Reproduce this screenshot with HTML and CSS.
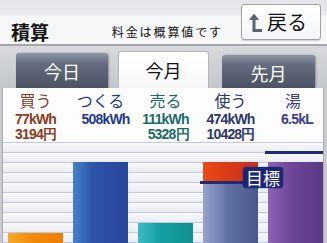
FILE: index.html
```html
<!DOCTYPE html>
<html lang="ja">
<head>
<meta charset="utf-8">
<link rel="stylesheet" href="styles.css">
</head>
<body>
<div class="app">
  <header class="hdr">
    <h1 class="title">積算</h1>
    <span class="note">料金は概算値です</span>
    <button class="back">
      <svg class="back-icon" width="14" height="20" viewBox="0 0 14 20">
        <polygon points="0,7 5,0.5 10,7" fill="#5a6274"/>
        <path d="M5 6 V17.5 H13" fill="none" stroke="#5a6274" stroke-width="3"/>
      </svg>
      <span>戻る</span>
    </button>
  </header>
  <nav class="tabs">
    <div class="tab tab-day">今日</div>
    <div class="tab tab-active">今月</div>
    <div class="tab tab-last">先月</div>
  </nav>
  <section class="panel">
    <div class="stats">
      <div class="stat buy"><div class="name">買う</div><div class="nums"><div>77kWh</div><div>3194円</div></div></div>
      <div class="stat make"><div class="name">つくる</div><div class="nums"><div>508kWh</div></div></div>
      <div class="stat sell"><div class="name">売る</div><div class="nums"><div>111kWh</div><div>5328円</div></div></div>
      <div class="stat use"><div class="name">使う</div><div class="nums"><div>474kWh</div><div>10428円</div></div></div>
      <div class="stat water"><div class="name">湯</div><div class="nums"><div>6.5kL</div></div></div>
    </div>
    <div class="chart">
      <div class="col"><div class="bar bar-buy" style="height:10px"></div></div>
      <div class="col"><div class="bar bar-make" style="height:81px"></div></div>
      <div class="col"><div class="bar bar-sell" style="height:20px"></div></div>
      <div class="col col-use">
        <div class="bar bar-use" style="height:81px">
          <div class="over" style="height:21px"></div>
        </div>
        <div class="target target-use"></div>
        <div class="goal">目標</div>
      </div>
      <div class="col col-water">
        <div class="bar bar-water" style="height:81px"></div>
        <div class="target target-water"></div>
      </div>
    </div>
  </section>
</div>
</body>
</html>
```

FILE: styles.css
```css
* { box-sizing: border-box; }
html, body { margin: 0; padding: 0; }
body {
  width: 327px;
  height: 243px;
  overflow: hidden;
  font-family: "Noto Sans CJK JP", "Liberation Sans", sans-serif;
  background: #c9cbcf;
}
.app { width: 327px; height: 243px; display: flex; flex-direction: column; }

.hdr {
  height: 46px;
  display: flex;
  align-items: flex-start;
  padding: 0 6px 0 11px;
  background: linear-gradient(#e3e5e8 0, #e6e8eb 14px, #f5f6f7 16px, #f7f7f8 43px);
  border-bottom: 2px solid #a4a7ac;
}
.title {
  margin: 21px 0 0 0;
  font-size: 19px;
  line-height: 22px;
  font-weight: 700;
  color: #141414;
}
.note {
  margin: 24px 18px 0 auto;
  font-size: 12px;
  line-height: 16px;
  letter-spacing: 1.9px;
  color: #111;
}
.back {
  margin-top: 4px;
  width: 80px;
  height: 36px;
  padding: 0 0 0 7px;
  display: flex;
  align-items: center;
  gap: 4px;
  background: linear-gradient(#ffffff, #f4f5f6);
  border: 1px solid #9ea2a8;
  border-radius: 3px;
  box-shadow: 0 1px 1px rgba(0,0,0,0.15);
  font-family: inherit;
  font-size: 20px;
  line-height: 22px;
  color: #141414;
}
.back-icon { flex: none; margin-top: 1px; }

.tabs {
  height: 42px;
  display: flex;
  align-items: flex-end;
  background: linear-gradient(#d8dadd, #c3c6ca);
}
.tab {
  display: flex;
  align-items: center;
  justify-content: center;
  font-size: 18px;
  border-radius: 3px 3px 0 0;
}
.tab-day, .tab-last {
  color: #ffffff;
  background: linear-gradient(#8e96a5 0, #646c7e 30%, #4a5264 100%);
  box-shadow: 1px 0 2px rgba(0,0,0,0.3);
}
.tab-day { margin-left: 16px; width: 92px; height: 35px; }
.tab-active {
  margin-left: 10px;
  width: 91px;
  height: 37px;
  color: #111;
  background: linear-gradient(#ffffff, #f6f7f8);
  border: 1px solid #b3b6bb;
  border-bottom: none;
  padding-bottom: 1px;
}
.tab-last { margin-left: 13px; width: 93px; height: 33px; padding-top: 2px; }

.panel {
  flex: 1;
  margin: 0 3px 0 2px;
  border-left: 1px solid #a9adb3;
  border-right: 1px solid #a9adb3;
  background: #fdfdfe;
  display: flex;
  flex-direction: column;
}
.stats {
  height: 54px;
  display: grid;
  grid-template-columns: 65px 65px 65px 65px 60px;
  padding-top: 1px;
}
.stat { display: flex; flex-direction: column; align-items: center; }
.name { font-size: 16px; line-height: 23px; }
.nums {
  font-family: "Liberation Sans", sans-serif;
  font-weight: 700;
  font-size: 14px;
  line-height: 15px;
  letter-spacing: -0.8px;
  text-align: right;
}
.buy { color: #8a3b1b; }
.make { color: #1c3a8e; }
.make .nums { margin-left: 10px; }
.sell { color: #1a6a67; }
.use { color: #2c3868; }
.water { color: #3c3b84; }
.water .nums { margin-left: 8px; }

.chart {
  flex: 1;
  display: grid;
  grid-template-columns: 65px 65px 65px 65px 60px;
  align-items: end;
  background: repeating-linear-gradient(to bottom, #c2c8dd 0, #c2c8dd 1px, #f9fafc 1px, #e9ecf2 10px);
}
.col { position: relative; height: 100%; display: flex; align-items: flex-end; padding-left: 5px; }
.bar { width: 55px; position: relative; }
.bar-buy { background: linear-gradient(to right, #f6a92a, #f08a0a 45%, #ee7e00); }
.bar-make { background: linear-gradient(to right, #4582cc, #2f55a8 35%, #28469c); }
.bar-sell { background: linear-gradient(to right, #3dbcc2, #16a0a4 40%, #10908f); }
.bar-use { background: linear-gradient(to right, #96a4cc, #6272a4 45%, #4a5888); }
.over { background: linear-gradient(to right, #ec4a12, #d83a18 50%, #c42e22); }
.bar-water { background: linear-gradient(to right, #8e62b6, #6c4598 45%, #583a86); }

.target { position: absolute; background: #232a70; }
.target-use { left: 2px; top: 39px; width: 50px; height: 3px; }
.target-water { left: 2px; right: 0; top: 9px; height: 3px; }
.goal {
  position: absolute;
  left: 45px;
  top: 25px;
  width: 40px;
  height: 21px;
  z-index: 2;
  background: #1d2676;
  color: #fff;
  border-radius: 3px;
  font-size: 17px;
  line-height: 21px;
  text-align: center;
  box-shadow: 0 0 2px rgba(20,30,100,0.6);
}
```
